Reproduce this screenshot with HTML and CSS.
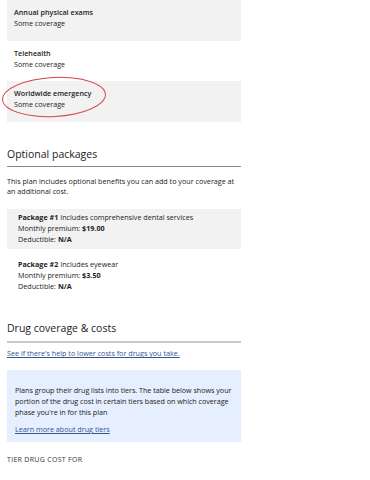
FILE: index.html
```html
<!DOCTYPE html>
<html>

<head>
  <title>Plan details</title>
  <meta charset="UTF-8">
  <link rel="stylesheet" href="styles.css">
</head>

<body>
  <div class="page">

    <ul class="benefits">
      <li class="benefit shaded">
        <b>Annual physical exams</b>
        <span>Some coverage</span>
      </li>
      <li class="benefit">
        <b>Telehealth</b>
        <span>Some coverage</span>
      </li>
      <li class="benefit shaded circled">
        <b>Worldwide emergency</b>
        <span>Some coverage</span>
      </li>
    </ul>

    <h2 class="section-title">Optional packages</h2>
    <p class="intro">This plan includes optional benefits you can add to your coverage at an additional cost.</p>

    <div class="package shaded">
      <p><b>Package #1</b> Includes comprehensive dental services</p>
      <p>Monthly premium: <b>$19.00</b></p>
      <p>Deductible: <b>N/A</b></p>
    </div>
    <div class="package">
      <p><b>Package #2</b> Includes eyewear</p>
      <p>Monthly premium: <b>$3.50</b></p>
      <p>Deductible: <b>N/A</b></p>
    </div>

    <h2 class="section-title drug">Drug coverage &amp; costs</h2>
    <a class="link" href="#">See if there's help to lower costs for drugs you take.</a>

    <div class="notice">
      <p>Plans group their drug lists into tiers. The table below shows your portion of the drug cost in certain tiers based on which coverage phase you're in for this plan</p>
      <a class="link" href="#">Learn more about drug tiers</a>
    </div>

    <div class="table-head">TIER DRUG COST FOR</div>
  </div>
</body>

</html>
```

FILE: styles.css
```css
* {
  box-sizing: border-box;
}

body {
  margin: 0;
  font-family: "Open Sans", "Lato", sans-serif;
  font-size: 7.2px;
  color: #222;
  background: #fff;
}

.page {
  width: 248px;
  padding: 0 7px;
}

.shaded {
  background-color: #f2f2f2;
}

.benefits {
  list-style-type: none;
  margin: 0;
  padding: 0;
}

.benefit {
  height: 40.5px;
  padding: 7px 7px 0;
  display: flex;
  flex-direction: column;
  line-height: 11px;
}

.benefit b {
  font-weight: 600;
}

/* hand drawn mark round the last item */
.circled {
  position: relative;
}

.circled::after {
  content: "";
  position: absolute;
  left: -5px;
  top: -4px;
  width: 102px;
  height: 38px;
  border: 1px solid #d64545;
  border-radius: 50%;
  transform: rotate(-3deg);
}

.section-title {
  margin: 25px 0 0;
  padding-bottom: 5px;
  border-bottom: 1px solid #8a8a8a;
  font-family: "Open Sans", sans-serif;
  font-weight: 500;
  font-size: 10.5px;
  line-height: 14px;
  color: #222;
}

.intro {
  margin: 9px 0 12px;
  line-height: 10.7px;
}

.package {
  padding: 3.5px 11px;
  height: 40px;
}

.package p {
  margin: 0;
  line-height: 11px;
}

.package b {
  font-weight: 700;
}

.package + .package {
  margin-top: 7px;
}

.section-title.drug {
  margin-top: 25px;
  padding-bottom: 6px;
  border-bottom: 2px solid #c8c8c8;
}

.link {
  display: inline-block;
  color: #34548f;
  text-decoration: underline;
  line-height: 10.7px;
}

.drug + .link {
  margin-top: 5.5px;
}

.notice {
  margin-top: 11px;
  background-color: #e5efff;
  padding: 15px 2px 7px 8px;
}

.notice p {
  margin: 0 0 7px;
  line-height: 10.7px;
  letter-spacing: -0.03px;
}

.table-head {
  margin-top: 13px;
  font-family: "Open Sans", sans-serif;
  font-size: 7px;
  letter-spacing: 0.3px;
  color: #333;
}
```
